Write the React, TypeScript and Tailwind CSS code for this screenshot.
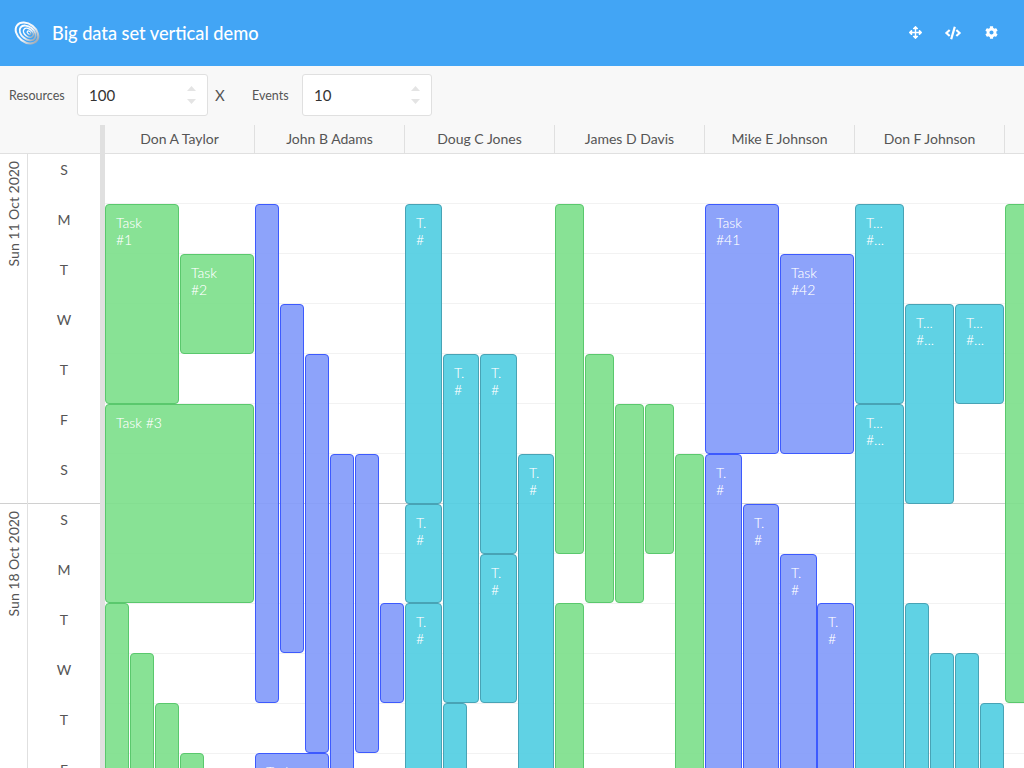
import { FaArrowsAlt, FaCode, FaCog } from "react-icons/fa";

type Ev = [number, number, number, number, string[]?];

const GREEN = "bg-[#7bdf8a]/90 border-[#5ac86d]";
const BLUE = "bg-[#8199fa]/90 border-[#3d5afe]";
const CYAN = "bg-[#4fcde1]/90 border-[#48a3b5]";

const groups: { cls: string; items: Ev[] }[] = [
  {
    cls: GREEN,
    items: [
      [105, 204, 179, 404, ["Task", "#1"]],
      [180, 254, 254, 354, ["Task", "#2"]],
      [105, 404, 254, 603, ["Task #3"]],
      [105, 603, 129, 790],
      [130, 653, 154, 790],
      [155, 703, 179, 790],
      [180, 753, 204, 790],
    ],
  },
  {
    cls: BLUE,
    items: [
      [255, 204, 279, 703],
      [280, 304, 304, 653],
      [305, 354, 329, 753],
      [330, 454, 354, 790],
      [355, 454, 379, 753],
      [380, 603, 404, 703],
      [255, 753, 329, 790, ["Task"]],
    ],
  },
  {
    cls: CYAN,
    items: [
      [405, 204, 442, 504, ["T.", "#"]],
      [443, 354, 479, 703, ["T.", "#"]],
      [480, 354, 517, 554, ["T.", "#"]],
      [518, 454, 554, 790, ["T.", "#"]],
      [405, 504, 442, 603, ["T.", "#"]],
      [480, 554, 517, 703, ["T.", "#"]],
      [405, 603, 442, 790, ["T.", "#"]],
      [443, 703, 467, 790],
    ],
  },
  {
    cls: GREEN,
    items: [
      [555, 204, 584, 554],
      [585, 354, 614, 603],
      [615, 404, 644, 603],
      [645, 404, 674, 554],
      [675, 454, 704, 790],
      [555, 603, 584, 790],
    ],
  },
  {
    cls: BLUE,
    items: [
      [705, 204, 779, 454, ["Task", "#41"]],
      [780, 254, 854, 454, ["Task", "#42"]],
      [705, 454, 742, 790, ["T.", "#"]],
      [743, 504, 779, 790, ["T.", "#"]],
      [780, 554, 817, 790, ["T.", "#"]],
      [817, 603, 854, 790, ["T.", "#"]],
    ],
  },
  {
    cls: CYAN,
    items: [
      [855, 204, 904, 404, ["T...", "#..."]],
      [905, 304, 954, 504, ["T...", "#..."]],
      [955, 304, 1004, 404, ["T...", "#..."]],
      [855, 404, 904, 790, ["T...", "#..."]],
      [905, 603, 929, 790],
      [930, 653, 954, 790],
      [955, 653, 979, 790],
      [980, 703, 1004, 790],
    ],
  },
  { cls: GREEN, items: [[1005, 204, 1060, 703]] },
];

const names = ["Don A Taylor", "John B Adams", "Doug C Jones", "James D Davis", "Mike E Johnson", "Don F Johnson", ""];
const days = ["S", "M", "T", "W", "T", "F", "S", "S", "M", "T", "W", "T", "F", "S"];

function Logo() {
  return (
    <svg width="28" height="28" viewBox="0 0 28 28" className="shrink-0">
      <defs>
        <linearGradient id="lg" x1="0.1" y1="0.1" x2="0.9" y2="0.9" gradientTransform="rotate(-40 0.5 0.5)">
          <stop offset="0" stopColor="#ffffff" />
          <stop offset="0.55" stopColor="#eef3f8" />
          <stop offset="1" stopColor="#98a4b0" />
        </linearGradient>
      </defs>
      <g transform="rotate(38 14 14)" fill="none" stroke="url(#lg)">
        <ellipse cx="14" cy="14" rx="12.5" ry="9" strokeWidth="2" />
        <ellipse cx="14.5" cy="13.5" rx="9" ry="6.2" strokeWidth="1.8" />
        <ellipse cx="15" cy="13" rx="5.6" ry="3.7" strokeWidth="1.5" />
        <ellipse cx="15.5" cy="12.5" rx="2.2" ry="1.4" strokeWidth="1.2" />
      </g>
    </svg>
  );
}

function NumberField({ value, width }: { value: string; width: string }) {
  return (
    <div className={`flex h-[42px] ${width} items-center justify-between rounded-[3px] border border-[#e0e0e0] bg-white pl-[11px] pr-[11px] text-[15px] text-[#333]`}>
      <span className="pt-[1px]">{value}</span>
      <span className="flex flex-col gap-[8px]">
        <svg width="9" height="5" viewBox="0 0 9 5" className="block"><path d="M4.5 0L9 5H0Z" fill="#e4e4e4" /></svg>
        <svg width="9" height="5" viewBox="0 0 9 5" className="block"><path d="M4.5 5L9 0H0Z" fill="#e4e4e4" /></svg>
      </span>
    </div>
  );
}

export default function App() {
  return (
    <div className="flex h-[768px] w-[1024px] flex-col overflow-hidden bg-white font-['Lato','Liberation_Sans',sans-serif]">
      <header className="flex h-[66px] shrink-0 items-center bg-[#42a5f5] pl-[13px] text-white">
        <Logo />
        <h1 className="ml-[11px] pt-[1px] text-[18.2px] font-medium">Big data set vertical demo</h1>
        <div className="ml-auto flex items-center gap-[24px] pr-[26px] pb-[1px] text-[13px]">
          <FaArrowsAlt className="translate-x-[1px]" />
          <FaCode className="text-[16px]" />
          <FaCog />
        </div>
      </header>

      <div className="flex h-[58px] shrink-0 items-center bg-[#f8f8f8] pl-[9px] text-[12.5px] text-[#555]">
        <span className="w-[68px] pt-[2px]">Resources</span>
        <NumberField value="100" width="w-[131px]" />
        <span className="ml-[7px] w-[37px] pt-[1px] text-[15px]">X</span>
        <span className="w-[50px] pt-[2px]">Events</span>
        <NumberField value="10" width="w-[130px]" />
      </div>

      <div className="flex min-h-0 flex-1">
        <div className="flex w-[100px] shrink-0 flex-col">
          <div className="h-[30px] shrink-0 border-b border-[#e0e0e0] bg-[#f8f8f8]" />
          <div className="flex">
            <div className="w-[28px] shrink-0 border-r border-[#e0e0e0] text-[14px] text-[#555]">
              <div className="flex h-[350px] justify-center border-b border-[#d0d0d0] pt-[7px]">
                <span className="h-fit rotate-180 [writing-mode:vertical-rl]">Sun 11 Oct 2020</span>
              </div>
              <div className="flex h-[350px] justify-center pt-[7px]">
                <span className="h-fit rotate-180 [writing-mode:vertical-rl]">Sun 18 Oct 2020</span>
              </div>
            </div>
            <div className="flex-1 text-center text-[14px] text-[#555]">
              {days.map((d, i) => (
                <div key={i} className={`h-[50px] pt-[5px] ${i === 6 ? "border-b border-[#d0d0d0]" : ""}`}>
                  {d}
                </div>
              ))}
            </div>
          </div>
        </div>

        <div className="flex w-[5px] shrink-0 flex-col bg-[#f8f8f8]">
          <div className="mt-[1px] flex-1 bg-[#e0e0e0]" />
        </div>

        <div className="relative min-w-0 flex-1 overflow-hidden">
          <div className="flex h-[30px] border-b border-[#e0e0e0] bg-[#f8f8f8] text-[14px] text-[#555]">
            {names.map((n, i) => (
              <div key={i} className="mt-[1px] flex w-[150px] shrink-0 items-center justify-center border-r border-[#e0e0e0] pb-[2px]">
                {n}
              </div>
            ))}
          </div>
          {days.map((_, i) => (
            <div key={i} className={`h-[50px] border-b ${i === 6 ? "border-[#d0d0d0]" : "border-[#f2f2f2]"}`} />
          ))}
          {groups.map((g) =>
            g.items.map(([x1, y1, x2, y2, lines], i) => (
              <div
                key={`${x1}-${y1}-${i}`}
                className={`absolute overflow-hidden rounded-[4px] border pl-[10px] pt-[9px] text-[14px] leading-[17px] font-light text-white [text-shadow:0_0_0.5px_#ffffff60] ${g.cls}`}
                style={{ left: x1 - 105, top: y1 - 124, width: x2 - x1, height: y2 - y1 }}
              >
                {lines?.map((l) => (
                  <div key={l} className="whitespace-nowrap">{l}</div>
                ))}
              </div>
            ))
          )}
        </div>
      </div>
    </div>
  );
}
